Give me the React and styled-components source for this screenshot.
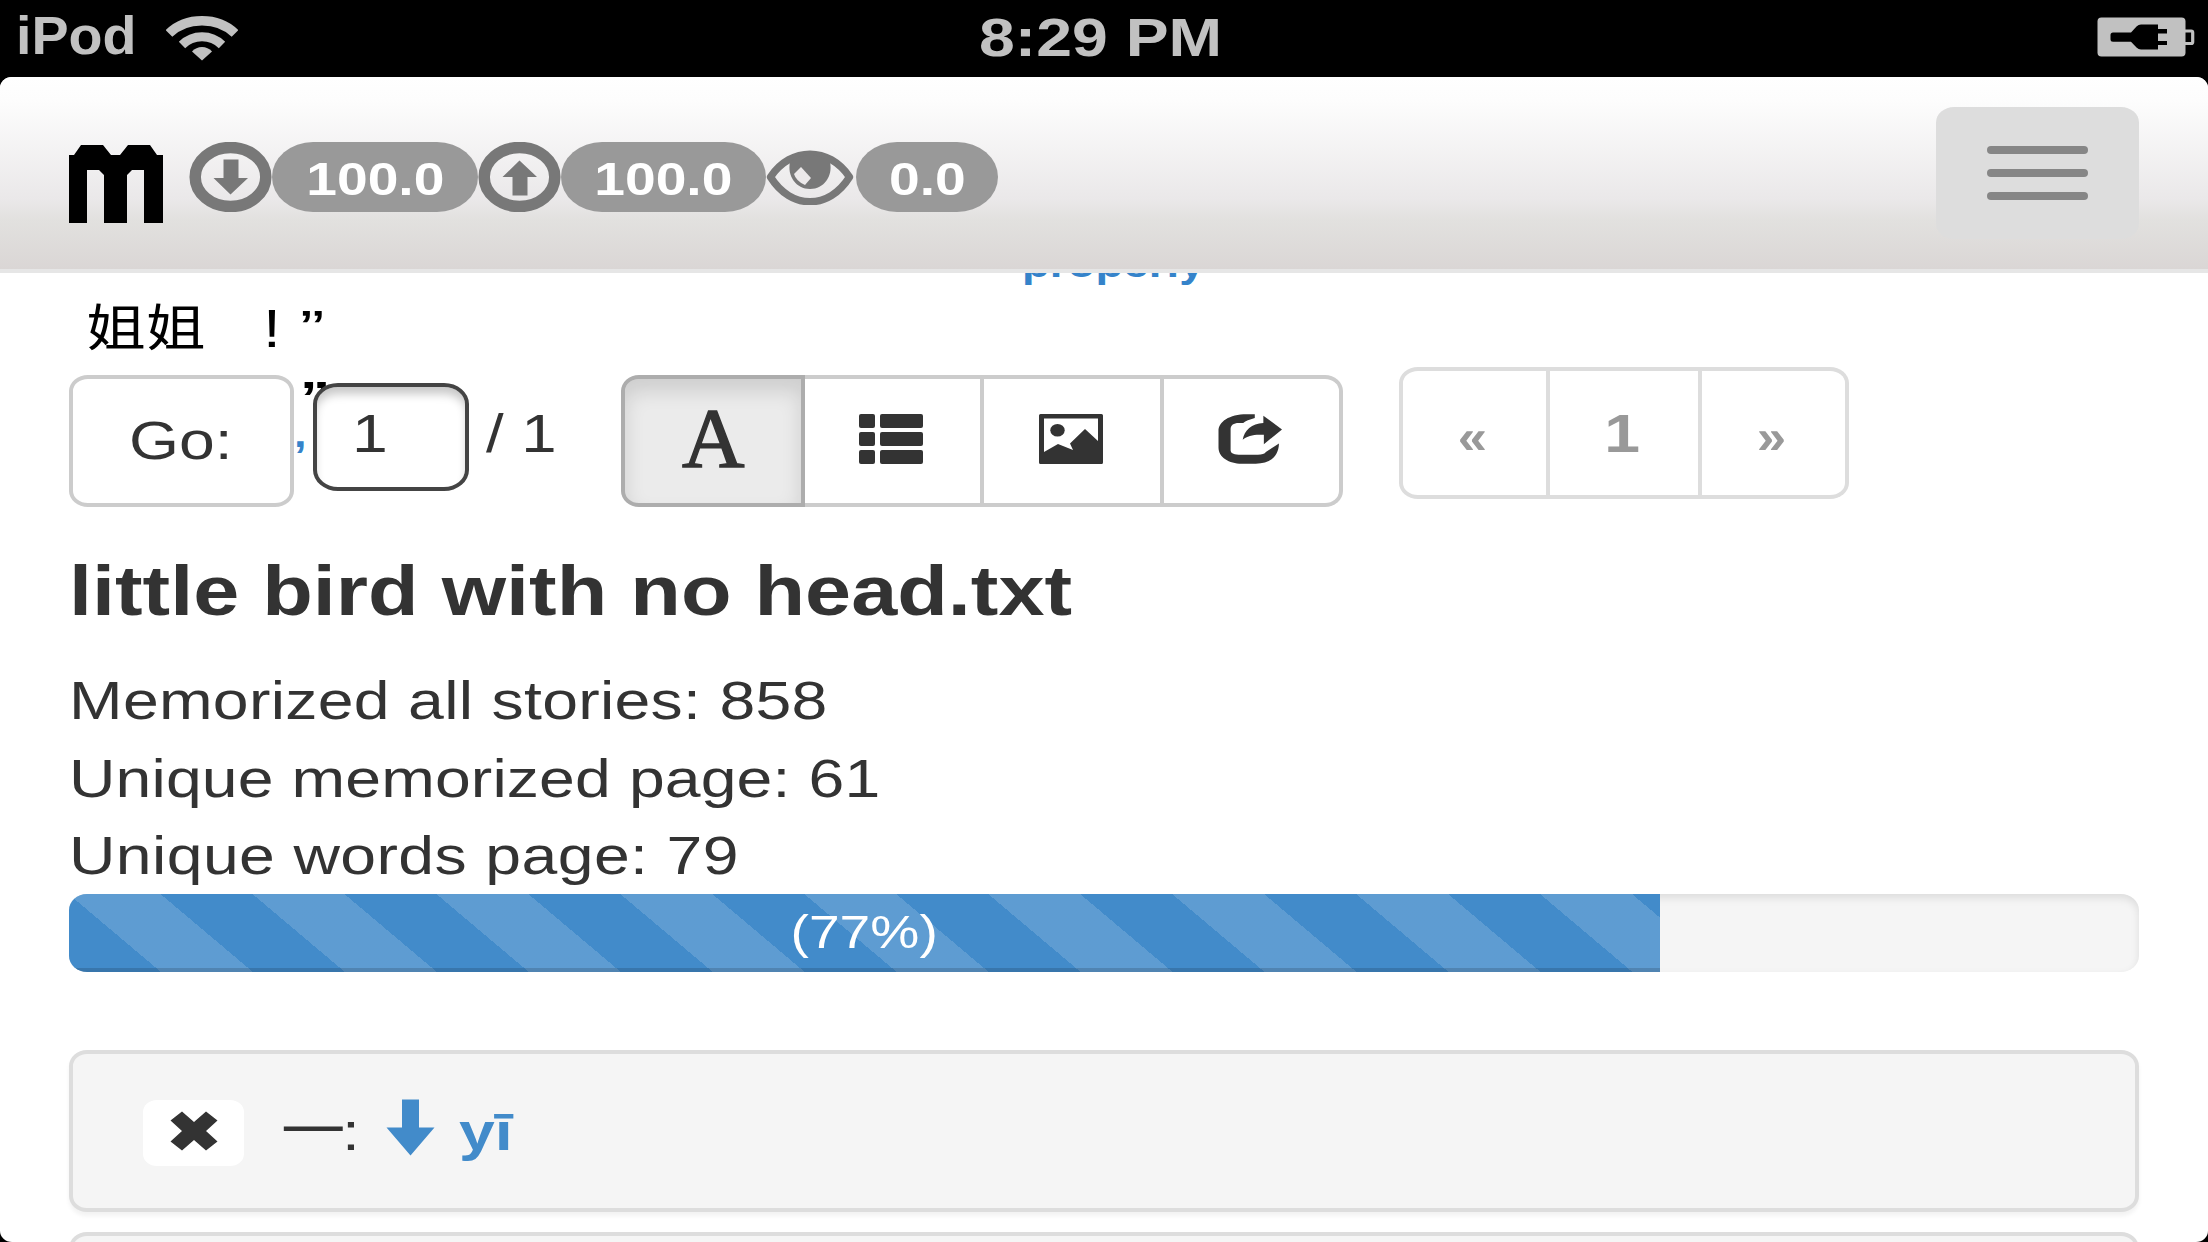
import React from "react";
import styled, { createGlobalStyle, css } from "styled-components";

const STRETCH = 1.185;

const GlobalStyle = createGlobalStyle`
  *, *::before, *::after { box-sizing: border-box; }
  html, body { margin: 0; padding: 0; background: #000; overflow: hidden; }
  body { font-family: "Liberation Sans", "Noto Sans CJK SC", sans-serif; color: #333; }
  svg { display: block; flex: none; }
  button, input { font-family: inherit; }
`;

const Screen = styled.div`
  width: 2208px;
  height: 1242px;
  background: #000;
  display: flex;
  flex-direction: column;
  overflow: hidden;
`;

/* Wide text: the display stretches everything horizontally */
const Wide = styled.span`
  display: block;
  flex: none;
  white-space: pre;
  font-size: ${(p) => p.$size || 54.3}px;
  font-weight: ${(p) => (p.$bold ? 700 : 400)};
  line-height: ${(p) => p.$line || 78}px;
  letter-spacing: ${(p) => p.$spacing || 0}px;
  transform: scaleX(${(p) => p.$stretch || STRETCH});
  transform-origin: ${(p) => (p.$center ? "50% 50%" : "0 50%")};
`;

const FontGlyph = styled(Wide)`
  font-family: "Liberation Serif", serif;
  -webkit-text-stroke: 1.4px #333;
`;

const StatusBar = styled.header`
  height: 77px;
  flex: none;
  display: grid;
  grid-template-columns: 1fr auto 1fr;
  padding: 0 13px 0 16px;
  color: #c1c1c1;
`;

const StatusLeft = styled.div`
  display: flex;
  align-items: flex-start;
  svg { margin-top: 15px; }
`;

const Carrier = styled.div`
  width: 150px;
  margin-top: -3px;
`;

const Clock = styled.div`
  margin-top: -1px;
  padding-right: 10px;
`;

const StatusRight = styled.div`
  display: flex;
  justify-content: flex-end;
  padding-top: 17px;
`;

const Viewport = styled.div`
  flex: 1;
  min-height: 0;
  background: #fff;
  border-radius: 12px / 11px;
  overflow: hidden;
  display: flex;
  flex-direction: column;
`;

const Navbar = styled.nav`
  height: 196px;
  flex: none;
  display: flex;
  align-items: flex-start;
  padding: 0 69px 0 69px;
  border-bottom: 4px solid #e6e6e6;
  background: linear-gradient(#ffffff 0%, #fdfdfd 12%, #eae8e9 64%, #e2e1df 74%, #dad6d5 100%);
`;

const Logo = styled.div`
  width: 120px;
  padding-top: 68px;
`;

const Stats = styled.div`
  display: flex;
  align-items: center;
  height: 70px;
  margin-top: 64.5px;
`;

const Badge = styled.span`
  width: ${(p) => p.$width}px;
  height: 70px;
  border-radius: 41px / 35px;
  background: #999;
  color: #fff;
  display: flex;
  justify-content: center;
  padding-top: 2px;
`;

const MenuButton = styled.button`
  margin: 30px 0 0 auto;
  width: 203px;
  height: 132px;
  border: 0;
  border-radius: 18px / 15.5px;
  background: #ddd;
  padding: 0;
  display: flex;
  flex-direction: column;
  align-items: center;
  justify-content: center;
  gap: 15.3px;
`;

const MenuLine = styled.span`
  width: 101px;
  height: 8px;
  border-radius: 4px;
  background: #868686;
`;

const Content = styled.main`
  flex: 1;
  min-height: 0;
  padding: 0 69px;
`;

const ClippedGloss = styled.div`
  height: 17px;
  overflow: hidden;
  color: #3583ca;
  padding-left: 953px;
  span { margin-top: -29px; }
`;

const StoryLine = styled.div`
  height: 77px;
  display: flex;
  color: #000;
  padding-left: 17px;
`;

const Slot = styled.div`
  width: ${(p) => p.$width}px;
  flex: none;
  margin-top: ${(p) => p.$top || 0}px;
`;

const Controls = styled.div`
  position: relative;
  height: 141px;
  display: flex;
  align-items: flex-start;
`;

/* Reader punctuation that shows through behind the floating toolbar */
const Leftover = styled.div`
  position: absolute;
  left: ${(p) => p.$x}px;
  top: ${(p) => p.$y}px;
  color: ${(p) => p.$color};
`;

const GoButton = styled.button`
  width: 225px;
  height: 132px;
  margin: 8px 19px 0 0;
  padding: 0 0 0 56px;
  border: 4px solid #ccc;
  border-radius: 19px / 16px;
  background: #fff;
  color: #333;
  display: flex;
  align-items: center;
  z-index: 1;
`;

const PageInput = styled.div`
  width: 156px;
  height: 108px;
  margin: 16px 0 0;
  padding: 8px 0 0 35px;
  border: 4px solid #444;
  border-radius: 25px / 21px;
  background: #fff;
  box-shadow: inset 0 9px 10px -2px rgba(0, 0, 0, 0.22);
  z-index: 1;
`;

const PageTotal = styled.div`
  width: 152px;
  padding: 28px 0 0 17px;
`;

const ButtonGroup = styled.div`
  display: flex;
  margin: 8px 56px 0 0;
  width: 722px;
`;

const ToolButton = styled.button`
  width: ${(p) => p.$width}px;
  height: 132px;
  margin: 0;
  padding: 0 3px 4px 0;
  border: 4px solid #ccc;
  border-left-width: ${(p) => (p.$active ? 4 : 0)}px;
  background: #fff;
  color: #333;
  display: flex;
  align-items: center;
  justify-content: center;
  ${(p) =>
    p.$active &&
    css`
      padding-right: 0;
      background: #ebebeb;
      border-color: #adadad;
      box-shadow: inset 0 12px 20px rgba(0, 0, 0, 0.125);
    `}
  &:first-child { border-radius: 18px 0 0 18px / 16px 0 0 16px; }
  &:last-child { border-radius: 0 18px 18px 0 / 0 16px 16px 0; }
`;

const Pagination = styled.div`
  display: flex;
`;

const PageCell = styled.a`
  width: ${(p) => p.$width}px;
  height: 132px;
  border: 4px solid #ddd;
  border-left-width: ${(p) => (p.$first ? 4 : 0)}px;
  color: #999;
  display: flex;
  justify-content: center;
  padding: 24px 4px 0 0;
  &:first-child { border-radius: 19px 0 0 19px / 16px 0 0 16px; }
  &:last-child { border-radius: 0 19px 19px 0 / 0 16px 16px 0; }
`;

const Title = styled.h1`
  margin: 0;
  height: 154px;
  padding-top: 37px;
`;

const Stat = styled.p`
  margin: 0;
  height: 77.6px;
`;

const Track = styled.div`
  height: 78px;
  margin: -1px 0 78px;
  border-radius: 18px / 16px;
  overflow: hidden;
  background: #f5f5f5;
  box-shadow: inset 0 4px 8px rgba(0, 0, 0, 0.1);
`;

const Bar = styled.div`
  width: 1591px;
  height: 78px;
  color: #fff;
  display: flex;
  justify-content: center;
  background: repeating-linear-gradient(
      40.15deg,
      transparent 0 59.3px,
      rgba(255, 255, 255, 0.15) 59.3px 118.6px
    ),
    #428bca;
  box-shadow: inset 0 -4px 0 rgba(0, 0, 0, 0.15);
`;

const WordRow = styled.section`
  height: 162px;
  margin-bottom: 20px;
  border: 4px solid #ddd;
  border-radius: 18px / 16px;
  background: #f5f5f5;
  box-shadow: 0 4px 4px rgba(0, 0, 0, 0.05);
  display: flex;
  align-items: flex-start;
  padding: 46px 0 0 70px;
`;

const RemoveButton = styled.button`
  width: 101px;
  height: 66px;
  margin: 0 37px 0 0;
  padding: 0 0 3px;
  border: 0;
  border-radius: 14px / 12px;
  background: #fff;
  color: #333;
  display: flex;
  align-items: center;
  justify-content: center;
`;

const Pinyin = styled.a`
  display: flex;
  color: #428bca;
  svg { margin: -1px 24px 0 0; }
  span { margin-top: -7px; }
`;

const WifiIcon = () => (
  <svg width="72" height="46" viewBox="0 0 72 46" fill="none" stroke="#c1c1c1">
    <path d="M3 18.5C20 1.5 52 1.5 69 18.5" strokeWidth="9.4" />
    <path d="M16 30C27 19 45 19 56 30" strokeWidth="9" />
    <path d="M26 36.5C31 30.5 41 30.5 46 36.5L36 45.5Z" fill="#c1c1c1" stroke="none" />
  </svg>
);

const BatteryIcon = () => (
  <svg width="98" height="40" viewBox="0 0 98 40">
    <rect x="0.5" y="0.5" width="88" height="39" rx="4" fill="#c1c1c1" />
    <path d="M88 14h6.2q1.5 0 1.5 1.5v9.5q0 1.5-1.5 1.5H88" fill="none" stroke="#c1c1c1" strokeWidth="3.2" />
    <path
      d="M16 15.5h18l5.500-6q2-2 4.500-2h17v4.500h9v4.500h-9v7.500h9v4h-9v4.500H44q-2.500 0-4.500-2l-5.500-5.800H16q-2.500 0-2.500-2.500v-4.200q0-2.500 2.500-2.500Z"
      fill="#000"
    />
  </svg>
);

const LogoMark = () => (
  <svg width="94" height="78" viewBox="0 0 94 78">
    <path
      d="M0 10h5L12 0h22l8 10h9L59 0h22l7 10h6v68H75V25H63l-5 5v48H35V30l-5-5H18v53H0Z"
      fill="#000"
    />
  </svg>
);

const CircleArrow = ({ up }) => (
  <svg width="83" height="70" viewBox="0 0 83 70" fill="#787878">
    <ellipse cx="41.5" cy="35" rx="35.3" ry="29.5" fill="none" stroke="#787878" strokeWidth="11.5" />
    <path
      d="M34.5 17.5h15V36h9.5L41.5 52.5 24.5 36h10Z"
      transform={up ? "matrix(1 0 0 -1 0 71)" : undefined}
    />
  </svg>
);

const EyeBox = styled.span`
  margin: 0 1px 0 -1px;
`;

const EyeIcon = () => (
  <EyeBox>
    <svg width="90" height="56" viewBox="0 0 90 56">
      <path
        d="M5.5 28C26 -2.5 64 -2.5 84.5 28C64 61 26 61 5.5 28Z"
        fill="none"
        stroke="#787878"
        strokeWidth="7.4"
        strokeLinejoin="round"
      />
      <path d="M25 13C34 4 56 4 65 13C68 27 59 40 45 40C31 40 22 27 25 13Z" fill="#787878" />
      <path d="M36 18l10 11-6 7q-9-4-11-11Z" fill="#ece9ea" />
    </svg>
  </EyeBox>
);

const ListIcon = () => (
  <svg width="64" height="50" viewBox="0 0 64 50" fill="#333">
    {[0, 18, 36].map((y) => (
      <g key={y}>
        <rect x="0" y={y} width="16" height="14" rx="2" />
        <rect x="21" y={y} width="43" height="14" rx="2" />
      </g>
    ))}
  </svg>
);

const PictureIcon = () => (
  <svg width="64" height="50" viewBox="0 0 64 50" fill="#333">
    <path
      fillRule="evenodd"
      d="M1.5 0h61q1.5 0 1.5 1.5v47q0 1.5-1.5 1.5h-61Q0 50 0 48.500v-47Q0 0 1.500 0ZM5 4.500V38l14-8 15 6-3-6.500L46 15l13 12V4.500Z"
    />
    <ellipse cx="18.5" cy="16.2" rx="7.2" ry="6.3" />
  </svg>
);

const ShareIcon = () => (
  <svg width="64" height="50" viewBox="1243 221 127 151" preserveAspectRatio="none" fill="#333">
    <path d="M1316 222H1300C1265 222 1244 245 1244 272V322C1244 352 1265 371 1290 371H1318C1345 371 1363 352 1364 310L1338 336C1336 342 1330 344 1322 344H1284C1272 344 1268 338 1268 330V266C1268 255 1274 248 1284 248H1293C1298 242 1305 238 1316 233Z" />
    <path d="M1333 226L1370 268L1334 312V284C1315 282 1302 286 1292 299C1295 270 1310 250 1333 248Z" />
  </svg>
);

const CrossIcon = () => (
  <svg width="48" height="40" viewBox="0 0 48 40" fill="#333">
    <path d="M12 0.5L24 11 36 0.5 47.5 9.5 36 20 47.5 30.5 36 39.5 24 29 12 39.5 0.5 30.5 12 20 0.5 9.5Z" />
  </svg>
);

const DownArrow = () => (
  <svg width="49" height="57" viewBox="0 0 49 57" fill="#428bca">
    <path d="M16 0.5H33V28.5H48.5L24.5 56.5 0.5 28.5H16Z" />
  </svg>
);

export default function App() {
  return (
    <>
      <GlobalStyle />
      <Screen>
        <StatusBar>
          <StatusLeft>
            <Carrier>
              <Wide $bold $size={53} $stretch={1.05}>iPod</Wide>
            </Carrier>
            <WifiIcon />
          </StatusLeft>
          <Clock>
            <Wide $bold $center>8:29 PM</Wide>
          </Clock>
          <StatusRight>
            <BatteryIcon />
          </StatusRight>
        </StatusBar>

        <Viewport>
          <Navbar>
            <Logo>
              <LogoMark />
            </Logo>
            <Stats>
              <CircleArrow />
              <Badge $width={206}>
                <Wide $bold $center $size={46.6} $line={70}>100.0</Wide>
              </Badge>
              <CircleArrow up />
              <Badge $width={205}>
                <Wide $bold $center $size={46.6} $line={70}>100.0</Wide>
              </Badge>
              <EyeIcon />
              <Badge $width={142}>
                <Wide $bold $center $size={46.6} $line={70}>0.0</Wide>
              </Badge>
            </Stats>
            <MenuButton>
              <MenuLine />
              <MenuLine />
              <MenuLine />
            </MenuButton>
          </Navbar>

          <Content>
            <ClippedGloss>
              <Wide $bold $size={38.5} $line={40}>properly</Wide>
            </ClippedGloss>
            <StoryLine>
              <Slot $width={177}>
                <Wide $size={50.5}>姐姐</Wide>
              </Slot>
              <Slot $width={37}>
                <Wide>!</Wide>
              </Slot>
              <Slot $width={40}>
                <Wide $size={50.5} $stretch={1.45}>”</Wide>
              </Slot>
            </StoryLine>

            <Controls>
              <Leftover $x={231} $y={9} $color="#000">
                <Wide $bold $size={46.6} $line={44} $stretch={1.3}>”</Wide>
              </Leftover>
              <Leftover $x={225} $y={53} $color="#3583ca">
                <Wide $bold $size={38} $line={28}>,</Wide>
              </Leftover>
              <GoButton>
                <Wide>Go:</Wide>
              </GoButton>
              <PageInput>
                <Wide>1</Wide>
              </PageInput>
              <PageTotal>
                <Wide $stretch={1.17}>/ 1</Wide>
              </PageTotal>
              <ButtonGroup>
                <ToolButton $active $width={184}>
                  <FontGlyph $center $size={84} $stretch={1.03} $line={100}>A</FontGlyph>
                </ToolButton>
                <ToolButton $width={179}><ListIcon /></ToolButton>
                <ToolButton $width={180}><PictureIcon /></ToolButton>
                <ToolButton $width={179}><ShareIcon /></ToolButton>
              </ButtonGroup>
              <Pagination>
                <PageCell $first $width={151}>
                  <Wide $bold $center $size={48} $line={84} $stretch={1.1}>«</Wide>
                </PageCell>
                <PageCell $width={152}>
                  <Wide $bold $center>1</Wide>
                </PageCell>
                <PageCell $width={147}>
                  <Wide $bold $center $size={48} $line={84} $stretch={1.1}>»</Wide>
                </PageCell>
              </Pagination>
            </Controls>

            <Title>
              <Wide $bold $size={69.9} $line={92}>little bird with no head.txt</Wide>
            </Title>
            <Stat><Wide $spacing={0.25}>Memorized all stories: 858</Wide></Stat>
            <Stat><Wide $spacing={0.1}>Unique memorized page: 61</Wide></Stat>
            <Stat><Wide $spacing={0.33}>Unique words page: 79</Wide></Stat>
            <Track>
              <Bar>
                <Wide $center $size={46.6} $line={77}>(77%)</Wide>
              </Bar>
            </Track>

            <WordRow>
              <RemoveButton>
                <CrossIcon />
              </RemoveButton>
              <Slot $width={61} $top={-7}>
                <Wide>一</Wide>
              </Slot>
              <Slot $width={44} $top={-7}>
                <Wide>:</Wide>
              </Slot>
              <Pinyin>
                <DownArrow />
                <Wide $bold>yī</Wide>
              </Pinyin>
            </WordRow>
            <WordRow />
          </Content>
        </Viewport>
      </Screen>
    </>
  );
}
